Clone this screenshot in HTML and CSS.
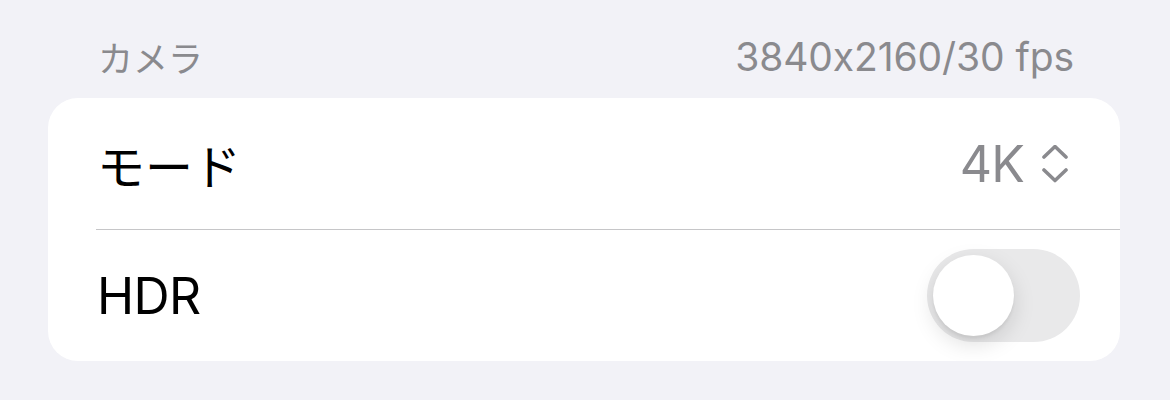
FILE: index.html
```html
<!DOCTYPE html>
<html lang="ja">
<head>
<meta charset="utf-8">
<link rel="stylesheet" href="styles.css">
</head>
<body>
<div class="page">
  <div class="section-header">
    <span class="header-title">カメラ</span>
    <span class="header-detail">3840x2160/30 fps</span>
  </div>
  <div class="card">
    <div class="row">
      <span class="row-label jp">モード</span>
      <span class="row-value">4K
        <svg class="updown" width="26" height="38" viewBox="0 0 26 38">
          <polyline points="2,12 13,1.5 24,12" />
          <polyline points="2,25 13,35.5 24,25" />
        </svg>
      </span>
    </div>
    <div class="divider"></div>
    <div class="row">
      <span class="row-label">HDR</span>
      <span class="toggle"><span class="knob"></span></span>
    </div>
  </div>
</div>
</body>
</html>
```

FILE: styles.css
```css
html, body {
  margin: 0;
  padding: 0;
  background: #f2f2f7;
}
body {
  font-family: Inter, "Noto Sans CJK JP", "Noto Sans", sans-serif;
  -webkit-font-smoothing: antialiased;
}
.page {
  width: 1170px;
  height: 400px;
  padding: 0 48px;
  box-sizing: border-box;
}
.section-header {
  height: 98px;
  display: flex;
  justify-content: space-between;
  align-items: center;
  padding: 15px 48px 0 50px;
  box-sizing: border-box;
  color: #8a8a8e;
  font-size: 39px;
}
.header-title {
  font-family: "Noto Sans CJK JP", sans-serif;
  font-size: 35px;
}
.header-detail {
  letter-spacing: -0.1px;
}
.card {
  background: #ffffff;
  border-radius: 30px;
  width: 1072px;
  overflow: hidden;
}
.row {
  height: 131px;
  display: flex;
  align-items: center;
  justify-content: space-between;
  padding: 0 40px 0 49px;
}
.row-label {
  font-size: 50px;
  color: #000;
  letter-spacing: -0.6px;
}
.row-label.jp {
  font-size: 48px;
  letter-spacing: 0;
}
.row-value {
  display: flex;
  align-items: center;
  gap: 18px;
  font-size: 50px;
  letter-spacing: -0.8px;
  color: #8a8a8e;
  padding-right: 12px;
}
.updown {
  display: block;
}
.updown polyline {
  fill: none;
  stroke: #8a8a8e;
  stroke-width: 3.6;
  stroke-linecap: round;
  stroke-linejoin: round;
}
.divider {
  height: 1px;
  background: #c6c6c8;
  margin-left: 48px;
}
.toggle {
  width: 153px;
  height: 93px;
  border-radius: 47px;
  background: #e9e9ea;
  position: relative;
}
.knob {
  position: absolute;
  left: 6px;
  top: 6px;
  width: 81px;
  height: 81px;
  border-radius: 50%;
  background: #fff;
  box-shadow: 0 8px 22px rgba(0,0,0,0.13), 0 3px 3px rgba(0,0,0,0.05);
}
```
